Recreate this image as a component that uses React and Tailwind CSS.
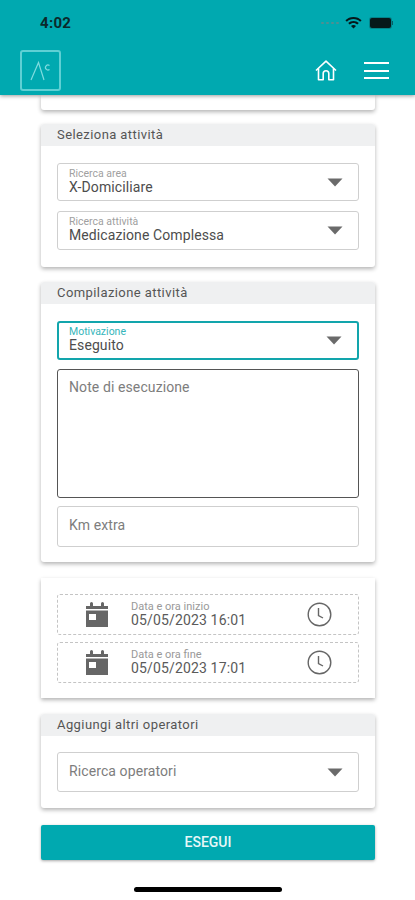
import React from 'react';

const font = { fontFamily: 'Roboto, sans-serif' };

const Caret = () => (
    <svg width="16" height="9" viewBox="0 0 16 9" className="shrink-0">
        <path d="M0.5 0.5H15.5L8 8.5Z" fill="#6a6a6a" />
    </svg>
);

const SelectField = ({ label, value, className, labelClass }) => (
    <div className={`flex items-center justify-between rounded-[3px] bg-white pr-[15px] ${className}`}>
        <div className="flex flex-col">
            <span className={`text-[10.500px] leading-[10px] ${labelClass || 'text-[#a0a0a0]'}`}>{label}</span>
            <span className="text-[14px] leading-[17px] tracking-[0.1px] text-[#4d4d4d]">{value}</span>
        </div>
        <Caret />
    </div>
);

const Card = ({ title, className, children }) => (
    <section className={`bg-white shadow-[0_2px_4px_rgba(0,0,0,0.3)] ${className}`}>
        {title && (
            <div className="h-[22px] rounded-t-[3px] bg-[#eff0f1] pl-[16px] text-[13px] leading-[21px] tracking-[0.42px] text-[#555]">{title}</div>
        )}
        {children}
    </section>
);

const CalendarIcon = () => (
    <svg width="22" height="25" viewBox="0 0 22 25" className="shrink-0">
        <path d="M0 4h4V1.500a1.500 1.500 0 0 1 3 0V4h8V1.500a1.500 1.500 0 0 1 3 0V4h4v3H0Z" fill="#666" />
        <path d="M0 8.500h22V25H0Z" fill="#666" />
        <rect x="3" y="12" width="7" height="6" fill="#fff" />
    </svg>
);

const ClockIcon = () => (
    <svg width="25" height="25" viewBox="0 0 25 25" fill="none" stroke="#666" strokeWidth="1.400" className="shrink-0">
        <circle cx="12.500" cy="12.500" r="11.300" />
        <path d="M11.500 6v7.500l4.500 2.500" />
    </svg>
);

const DateRow = ({ label, value, className }) => (
    <div className={`flex h-[41px] items-center rounded-[3px] border border-dashed border-[#c4c4c4] pl-[28px] pr-[26px] ${className}`}>
        <CalendarIcon />
        <div className="ml-[23px] flex flex-1 flex-col">
            <span className="text-[11px] leading-[11px] text-[#999]">{label}</span>
            <span className="text-[14px] leading-[17px] tracking-[0.15px] text-[#5a5a5a]">{value}</span>
        </div>
        <ClockIcon />
    </div>
);

export default function App() {
    return (
        <div className="flex h-[900px] w-[415px] flex-col overflow-hidden bg-white" style={font}>
            <header className="relative z-10 h-[95px] shrink-0 bg-[#00a9b0] shadow-[0_1px_4px_rgba(0,0,0,0.4)]">
                <div className="flex h-[46px] items-center justify-between pl-[40px] pr-[22px]">
                    <span className="text-[15px] font-bold tracking-[0.3px] text-[#0b2a2c]">4:02</span>
                    <div className="flex items-center">
                        <div className="mr-[6px] flex gap-[2px]">
                            <div className="h-[2px] w-[3px] rounded-full bg-[#4f8f92]" />
                            <div className="h-[2px] w-[3px] rounded-full bg-[#4f8f92]" />
                            <div className="h-[2px] w-[3px] rounded-full bg-[#4f8f92]" />
                            <div className="h-[2px] w-[3px] rounded-full bg-[#4f8f92]" />
                        </div>
                        <svg width="17" height="12" viewBox="0 0 17 12">
                            <path d="M8.500 0C5.300 0 2.500 1.200.4 3.300l1.500 1.500C3.600 3.100 5.900 2.100 8.500 2.100s4.900 1 6.600 2.700l1.500-1.500C14.500 1.200 11.700 0 8.500 0Z" fill="#06181a" />
                            <path d="M3.200 6.100l1.500 1.500c1-.9 2.300-1.500 3.800-1.500s2.800.6 3.800 1.500l1.500-1.500C12.400 4.800 10.500 4 8.500 4S4.600 4.800 3.200 6.100Z" fill="#06181a" />
                            <path d="M6 8.900L8.500 11.500 11 8.900C10.300 8.300 9.400 8 8.500 8S6.700 8.300 6 8.900Z" fill="#06181a" />
                        </svg>
                        <div className="ml-[8px] flex items-center">
                            <div className="h-[10px] w-[21px] rounded-[2px] bg-[#06181a] shadow-[0_0_0_1px_rgba(6,24,26,0.25)]" />
                            <div className="ml-[1px] h-[4px] w-[1px] bg-[#06181a]/50" />
                        </div>
                    </div>
                </div>
                <div className="mt-[4px] flex items-center justify-between pl-[20px] pr-[26px]">
                    <div className="flex h-[41px] w-[41px] items-center justify-center rounded-[3px] border-2 border-[#5fd0d4]">
                        <svg width="22" height="22" viewBox="0 0 22 22" fill="none" stroke="#7fdcdf" strokeWidth="1.200">
                            <path d="M1 20L8.500 2.500L14 20" />
                            <path d="M19.500 5.500A2.500 2.500 0 1 0 19.500 9.500" />
                        </svg>
                    </div>
                    <div className="flex items-center gap-[27px]">
                        <svg width="22" height="21" viewBox="0 0 22 21" fill="none" stroke="#fff" strokeWidth="1.600" strokeLinejoin="round">
                            <path d="M1 10.500L11 1.200L21 10.500" />
                            <path d="M3.500 8.500V19.800H8.200V13.500a2.800 2.800 0 0 1 5.600 0V19.800H18.500V8.500" />
                        </svg>
                        <div className="flex w-[25px] flex-col gap-[5.500px]">
                            <div className="h-[2px] bg-white" />
                            <div className="h-[2px] bg-white" />
                            <div className="h-[2px] bg-white" />
                        </div>
                    </div>
                </div>
            </header>

            <main className="flex flex-col pl-[41px] pr-[40px]">
                <Card className="h-[15px] rounded-b-[3px]" />

                <Card title="Seleziona attività" className="mt-[14px] h-[143px] rounded-[3px]">
                    <div className="flex flex-col gap-[10px] px-[16px] pt-[17px]">
                        <SelectField label="Ricerca area" value="X-Domiciliare" className="h-[38px] border border-[#cfcfcf] pl-[11px]" />
                        <SelectField label="Ricerca attività" value="Medicazione Complessa" className="h-[39px] border border-[#cfcfcf] pl-[11px]" />
                    </div>
                </Card>

                <Card title="Compilazione attività" className="mt-[15px] h-[280px] rounded-[3px]">
                    <div className="flex flex-col px-[16px] pt-[17px]">
                        <SelectField label="Motivazione" value="Eseguito" labelClass="text-[#35b5ba]" className="h-[39px] border-2 border-[#12a5ac] pl-[10px]" />
                        <div className="mt-[9px] h-[129px] rounded-[3px] border border-[#555] pl-[11px] pt-[9px] text-[14px] leading-[17px] tracking-[0.1px] text-[#7d7d7d]">Note di esecuzione</div>
                        <div className="mt-[8px] flex h-[41px] items-center rounded-[3px] border border-[#cfcfcf] pb-[2px] pl-[11px] text-[14px] tracking-[0.1px] text-[#7d7d7d]">Km extra</div>
                    </div>
                </Card>

                <Card className="mt-[16px] h-[120px]">
                    <div className="flex flex-col px-[16px] pt-[16px]">
                        <DateRow label="Data e ora inizio" value="05/05/2023 16:01" />
                        <DateRow label="Data e ora fine" value="05/05/2023 17:01" className="mt-[7px]" />
                    </div>
                </Card>

                <Card title="Aggiungi altri operatori" className="mt-[16px] h-[94px] rounded-[3px]">
                    <div className="px-[16px] pt-[16px]">
                        <div className="flex h-[40px] items-center justify-between rounded-[3px] border border-[#cfcfcf] pl-[11px] pr-[15px] text-[14px] tracking-[0.1px] text-[#7d7d7d]">
                            <span className="-mt-[2px]">Ricerca operatori</span>
                            <Caret />
                        </div>
                    </div>
                </Card>

                <button className="mt-[17px] h-[35px] rounded-[2px] bg-[#00a9b0] text-[14px] font-medium text-[#e6f7f8] shadow-[0_1px_3px_rgba(0,0,0,0.35)]">ESEGUI</button>
            </main>

            <div className="mx-auto mt-[27px] h-[5px] w-[148px] rounded-full bg-black" />
        </div>
    );
}
